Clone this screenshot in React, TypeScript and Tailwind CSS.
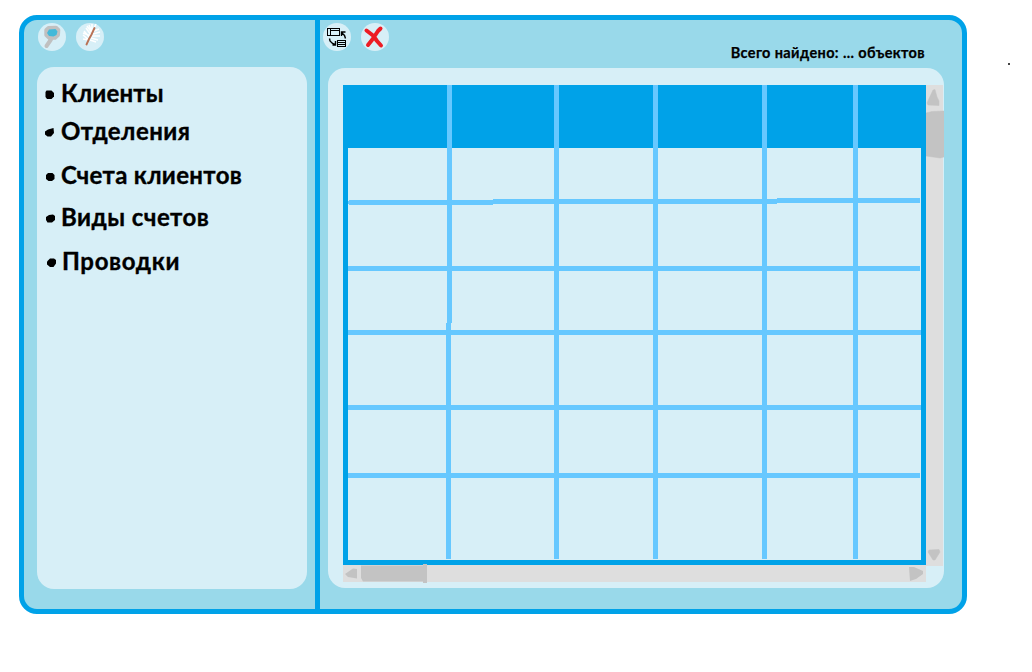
import React from "react";

const menu = [
  { label: "Клиенты", row: "h-[38px]", text: "tracking-[0.15px]", dot: "ml-[8px] mr-[7px]", blob: "M1.500 .5h5L9 3v3.500L6.500 9H2L.5 7V2z" },
  { label: "Отделения", row: "h-[44px]", text: "tracking-[0.45px]", dot: "ml-[8px] mr-[7px]", blob: "M3 1.500L8.500 0 9 5 6 8.500H2.500L0 6.500V3.500z" },
  { label: "Счета клиентов", row: "h-[42px]", text: "tracking-[0.33px]", dot: "ml-[9px] mr-[6px]", blob: "M2 1h4.500L8.500 3v4L6 9H2.500L0 7V3z" },
  { label: "Виды счетов", row: "h-[44px]", text: "tracking-[0.47px]", dot: "ml-[9px] mr-[6px]", blob: "M3 1l4-.5L9 2v4L6 8.500H1.500L0 6V3z" },
  { label: "Проводки", row: "h-[44px]", text: "tracking-[0.65px]", dot: "ml-[10px] mr-[6px]", blob: "M3 .5h4L9 2v3.500L6.500 9H3L0 6.500V3.500z" },
];

function IconButton({ label, children }: { label: string; children: React.ReactNode }) {
  return (
    <button aria-label={label} className="size-7 rounded-full bg-[#d7eff7]">
      <svg viewBox="0 0 28 28" className="size-7" fill="none">{children}</svg>
    </button>
  );
}

const Rule = () => <div className="h-[5px] bg-[#66c8ff]" />;
const Cell = ({ className }: { className: string }) => (
  <div className={`${className} border-r-[5px] border-[#66c8ff]`} />
);

function LowerCells() {
  return (
    <>
      <Rule />
      <Cell className="h-[70px]" />
      <Rule />
      <Cell className="h-[63px]" />
      <Rule />
      <Cell className="h-[81px]" />
    </>
  );
}

function Column({ width, bump }: { width: string; bump?: React.ReactNode }) {
  return (
    <div className={width}>
      <Cell className="h-[63px] bg-[#00a2e8]" />
      {bump ?? (
        <>
          <Cell className="h-[51px]" />
          <Rule />
          <Cell className="h-[62px]" />
        </>
      )}
      <Rule />
      <Cell className="h-[59px]" />
      <LowerCells />
    </div>
  );
}

function Table() {
  return (
    <div className="flex h-[480px] w-[583px] border-x-[5px] border-b-[5px] border-[#00a2e8]">
      <div className="w-[104px]">
        <Cell className="h-[63px] bg-[#00a2e8]" />
        <Cell className="h-[52px]" />
        <div className="flex h-[5px]">
          <div className="my-px w-px bg-[#66c8ff]" />
          <div className="grow bg-[#66c8ff]" />
        </div>
        <Cell className="h-[61px]" />
        <Rule />
        <Cell className="h-[52px]" />
        <Cell className="h-[7px] w-[103px]" />
        <Rule />
        <Cell className="h-[70px] w-[103px]" />
        <Rule />
        <Cell className="h-[63px] w-[103px]" />
        <Rule />
        <Cell className="h-[81px] w-[103px]" />
      </div>
      <Column
        width="w-[107px]"
        bump={
          <>
            <Cell className="h-[51px]" />
            <div className="flex h-[6px] border-r-[5px] border-[#66c8ff]">
              <div className="mt-px w-[41px] bg-[#66c8ff]" />
              <div className="mb-px grow bg-[#66c8ff]" />
            </div>
            <Cell className="h-[61px]" />
          </>
        }
      />
      <Column width="w-[99px]" />
      <Column width="w-[109px]" />
      <Column
        width="w-[91px]"
        bump={
          <>
            <Cell className="h-[50px]" />
            <div className="flex h-[6px] border-r-[5px] border-[#66c8ff]">
              <div className="mt-px w-[10px] bg-[#66c8ff]" />
              <div className="mb-px grow bg-[#66c8ff]" />
            </div>
            <Cell className="h-[62px]" />
          </>
        }
      />
      <div className="w-[63px]">
        <div className="h-[63px] bg-[#00a2e8]" />
        <div className="mt-[50px] mr-px"><Rule /></div>
        <div className="mt-[63px] mr-px"><Rule /></div>
        <div className="mt-[59px]"><Rule /></div>
        <div className="mt-[70px]"><Rule /></div>
        <div className="mt-[63px] mr-px"><Rule /></div>
      </div>
    </div>
  );
}

export default function App() {
  return (
    <div className="flex h-[672px] w-[1032px] overflow-hidden bg-white pt-[15px] pl-[19px] font-['Lato','Open_Sans',sans-serif] font-bold text-black">
      <div className="flex h-[599px] w-[948px] shrink-0 rounded-[18px] border-[5px] border-[#00a2e8] bg-[#99d9ea]">
        <aside className="w-[296px] shrink-0 border-r-[5px] border-[#00a2e8] pt-[3px] pl-[13px]">
          <div className="flex h-[44px] gap-[10px] pl-px">
            <IconButton label="Поиск">
              <path d="M10.500 5L18 4.700 20.300 7 20 12 17 14.800 11.500 15 8.300 12 8.300 7Z" fill="#c0c0c0" stroke="#c0c0c0" strokeWidth="4" strokeLinejoin="round" />
              <path d="M11 6.500L17.500 6 19.500 8.500 18.500 12 15.500 13.500 11 13 9 10Z" fill="#43b9d9" />
              <path d="M13 16.500L8.500 23" stroke="#c0c0c0" strokeWidth="4" strokeLinecap="round" />
            </IconButton>
            <IconButton label="Изменить">
              <path d="M13 17L7 12M14 15L8 8M15 12L10 5M16 9L13 2M16 10L16 1M17 8L20 1M18 8L23 6M17 11L24 9M16 13L24 13M15 15L22 17M14 17L20 19M13 17L7 16M15 13L7 10M16 10L11 3" stroke="#fff" strokeWidth="1.500" />
              <path d="M18.500 5L15.500 11.500L13 16L10.500 21.500" stroke="#b97357" strokeWidth="1.900" strokeLinecap="round" />
            </IconButton>
          </div>
          <nav className="h-[522px] w-[270px] rounded-[17px] bg-[#d7eff7] pt-[5px]">
            {menu.map((m) => (
              <div key={m.label} className={`flex items-start ${m.row}`}>
                <svg viewBox="0 0 9 9" className={`mt-[18px] size-[9px] shrink-0 ${m.dot}`}><path d={m.blob} /></svg>
                <span className={`pt-[6px] text-[24px] leading-[30px] whitespace-nowrap [-webkit-text-stroke:0.35px_black] ${m.text}`}>{m.label}</span>
              </div>
            ))}
          </nav>
        </aside>
        <main className="w-[642px] pt-[3px] pl-[8px]">
          <div className="-ml-[5px] flex h-[45px]">
            <div className="flex gap-[10px]">
              <IconButton label="Обмен">
                <g stroke="#000" shapeRendering="crispEdges">
                  <path d="M4.500 5.500H16.500V12.500H4.500ZM7.500 5.500V12.500M7.500 7.500H16.500M14.500 17.500H22.500V23.500H14.500ZM14.500 19.500H22.500M14.500 21.500H22.500" />
                </g>
                <path d="M22.500 15.500L21.500 12.500L19 10M22.500 9H18.500V13M6.500 15.500L7 18L9.500 20.500L12 21.500M12.500 18V22H9.500" stroke="#000" strokeWidth="1.400" />
              </IconButton>
              <IconButton label="Удалить">
                <path d="M19.500 5.500L17 8L11 17L7 22M5.500 7.500L12 12.500L16 18L20 22.500" stroke="#ed1c24" strokeWidth="4" strokeLinecap="round" strokeLinejoin="round" />
              </IconButton>
            </div>
            <div className="ml-auto pt-[20px] pr-[37px] text-[14.500px] leading-5 tracking-[0.38px] whitespace-nowrap [-webkit-text-stroke:0.25px_black]">Всего найдено: ... объектов</div>
          </div>
          <section className="h-[520px] w-[616px] rounded-[17px] bg-[#d7eff7] pt-[17px] pl-[15px]">
            <div className="flex">
              <Table />
              <div className="h-[481px] w-[18px]">
                <svg viewBox="0 0 18 481" className="h-[481px] w-[18px]">
                  <path d="M0 0H17V481H0Z" fill="#dedede" />
                  <path d="M7 5L9 4.500L11 12L13 16V20.500L2 20L1 18Z M0 28L6 26.500L18 26V72L14 73L0 71Z M3 465L13 464.500L14 467L9 475H7L2 467Z" fill="#c3c3c3" stroke="#c3c3c3" strokeWidth="0.500" />
                </svg>
              </div>
            </div>
            <div className="-mt-px h-[18px] w-[583px]">
              <svg viewBox="0 0 583 18" className="h-[18px] w-[583px] overflow-visible">
                <path d="M0 0H583V17H0Z" fill="#dedede" />
                <path d="M2 9L10 3.500L14 4V13.500L5 12Z M18 .5H80V-1H84V18H80V16.500H20L18 13Z M566 2H571L580 6V9L573 14L567 16Z" fill="#c3c3c3" />
              </svg>
            </div>
          </section>
        </main>
      </div>
      <div className="mt-[48px] ml-[41px] h-[2px] w-[2px] bg-[#444]" />
    </div>
  );
}
